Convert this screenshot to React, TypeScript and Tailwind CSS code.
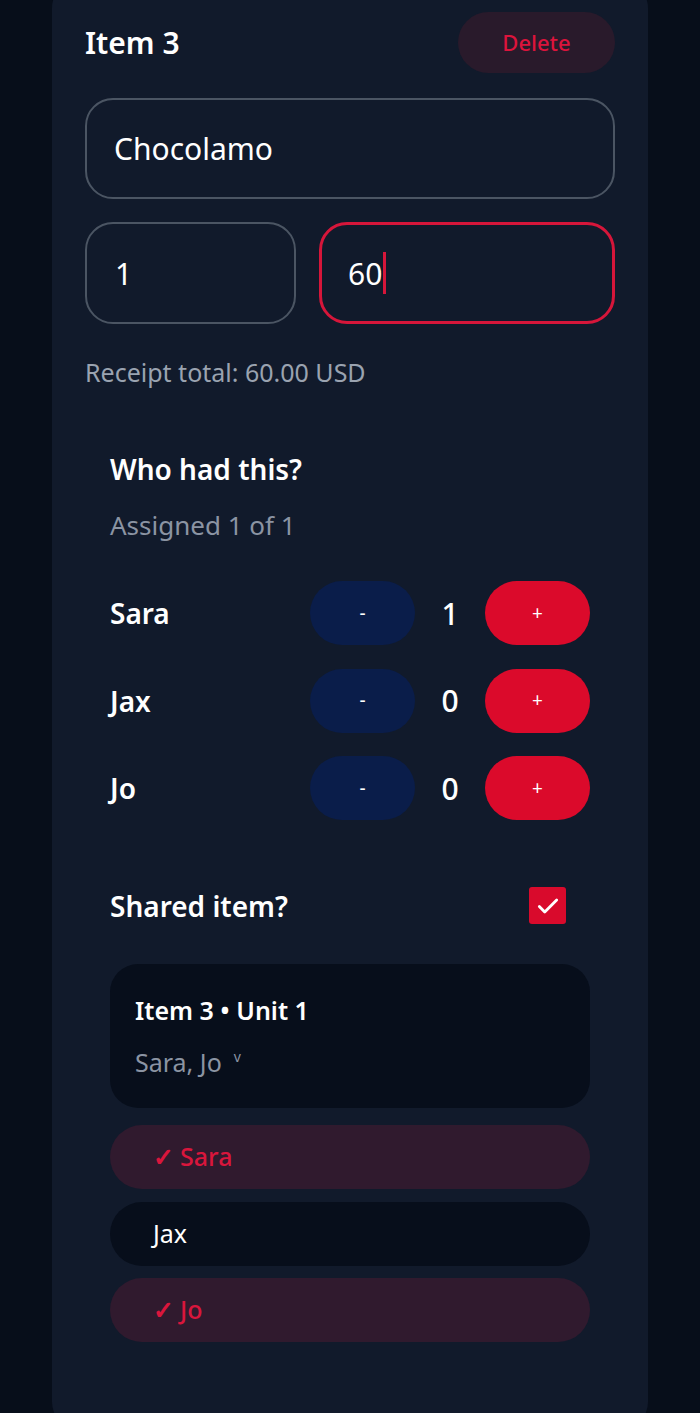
const people = [
  { name: "Sara", count: 1 },
  { name: "Jax", count: 0 },
  { name: "Jo", count: 0 },
];

const unitOptions = [
  { name: "Sara", selected: true },
  { name: "Jax", selected: false },
  { name: "Jo", selected: true },
];

export default function App() {
  return (
    <div
      className="h-[1413px] overflow-hidden bg-[#070e1a] px-[52px]"
      style={{ fontFamily: '"Noto Sans", "Open Sans", sans-serif' }}
    >
      <div className="-mt-[20px] h-[1450px] rounded-[28px] bg-[#111a2b] px-[33px] pt-[32px]">
        {/* Header */}
        <div className="flex h-[61px] items-center justify-between">
          <h2 className="text-[30px] font-semibold leading-[40px] text-white">Item 3</h2>
          <button className="flex h-[61px] w-[157px] items-center justify-center rounded-full bg-[#291a2b] text-[22px] font-medium text-[#dc143c]">
            Delete
          </button>
        </div>

        {/* Name */}
        <div className="mt-[25px] flex h-[101px] items-center rounded-[28px] border-2 border-[#4b5563] px-[27px] text-[30px] text-white">
          Chocolamo
        </div>

        {/* Qty + price */}
        <div className="mt-[23px] flex h-[102px] gap-[23px]">
          <div className="flex w-[211px] items-center rounded-[28px] border-2 border-[#4b5563] px-[28px] text-[30px] text-white">
            1
          </div>
          <div className="flex flex-1 items-center rounded-[28px] border-[3px] border-[#d6163a] px-[26px] text-[30px] text-white">
            60
            <span className="ml-[1px] h-[42px] w-[3px] bg-[#d6163a]" />
          </div>
        </div>

        <p className="mt-[33px] text-[25px] leading-[30px] text-[#9aa3b0]">
          Receipt total: 60.00 USD
        </p>

        {/* Assignment */}
        <div className="px-[25px]">
          <h3 className="mt-[65px] text-[28px] font-semibold leading-[34px] text-white">
            Who had this?
          </h3>
          <p className="mt-[24px] text-[26px] leading-[30px] text-[#8b94a3]">
            Assigned 1 of 1
          </p>

          <div className="mt-[41px] flex flex-col gap-[23.5px]">
            {people.map((p) => (
              <div key={p.name} className="flex h-[64px] items-center justify-between">
                <span className="text-[28px] font-semibold text-white">{p.name}</span>
                <div className="flex items-center">
                  <button className="flex h-[64px] w-[105px] items-center justify-center rounded-full bg-[#0a1d4a] text-[19px] text-white">
                    -
                  </button>
                  <span className="w-[70px] text-center text-[30px] font-medium text-white">
                    {p.count}
                  </span>
                  <button className="flex h-[64px] w-[105px] items-center justify-center rounded-full bg-[#db0a2b] text-[19px] text-white">
                    +
                  </button>
                </div>
              </div>
            ))}
          </div>

          {/* Shared */}
          <div className="mt-[67px] flex h-[37px] items-center justify-between">
            <span className="text-[28px] font-semibold text-white">Shared item?</span>
            <span className="mr-[24px] flex h-[37px] w-[37px] items-center justify-center rounded-[3px] bg-[#d90a2c]">
              <svg width="26" height="26" viewBox="0 0 24 24" fill="none">
                <path d="M4 12.5l5 5L20 6.5" stroke="white" strokeWidth="2.6" strokeLinecap="round" strokeLinejoin="round" />
              </svg>
            </span>
          </div>

          <div className="mt-[40px] h-[144px] rounded-[28px] bg-[#070e1b] px-[25px] pt-[31px]">
            <p className="text-[25px] font-semibold leading-[30px] text-white">Item 3 • Unit 1</p>
            <p className="mt-[22px] flex items-start text-[25px] leading-[30px] text-[#8b94a3]">
              Sara, Jo
              <span className="ml-[12px] text-[14px] leading-[20px]">v</span>
            </p>
          </div>

          <div className="mt-[17px] flex flex-col gap-[12.5px]">
            {unitOptions.map((o) =>
              o.selected ? (
                <div
                  key={o.name}
                  className="flex h-[64px] items-center rounded-full bg-[#301a2e] pl-[43px] text-[25px] font-medium text-[#d9163c]"
                >
                  <span className="mr-[6px] font-bold">✓</span>
                  {o.name}
                </div>
              ) : (
                <div
                  key={o.name}
                  className="flex h-[64px] items-center rounded-full bg-[#070e1b] pl-[43px] text-[25px] text-white"
                >
                  {o.name}
                </div>
              )
            )}
          </div>
        </div>
      </div>
    </div>
  );
}
